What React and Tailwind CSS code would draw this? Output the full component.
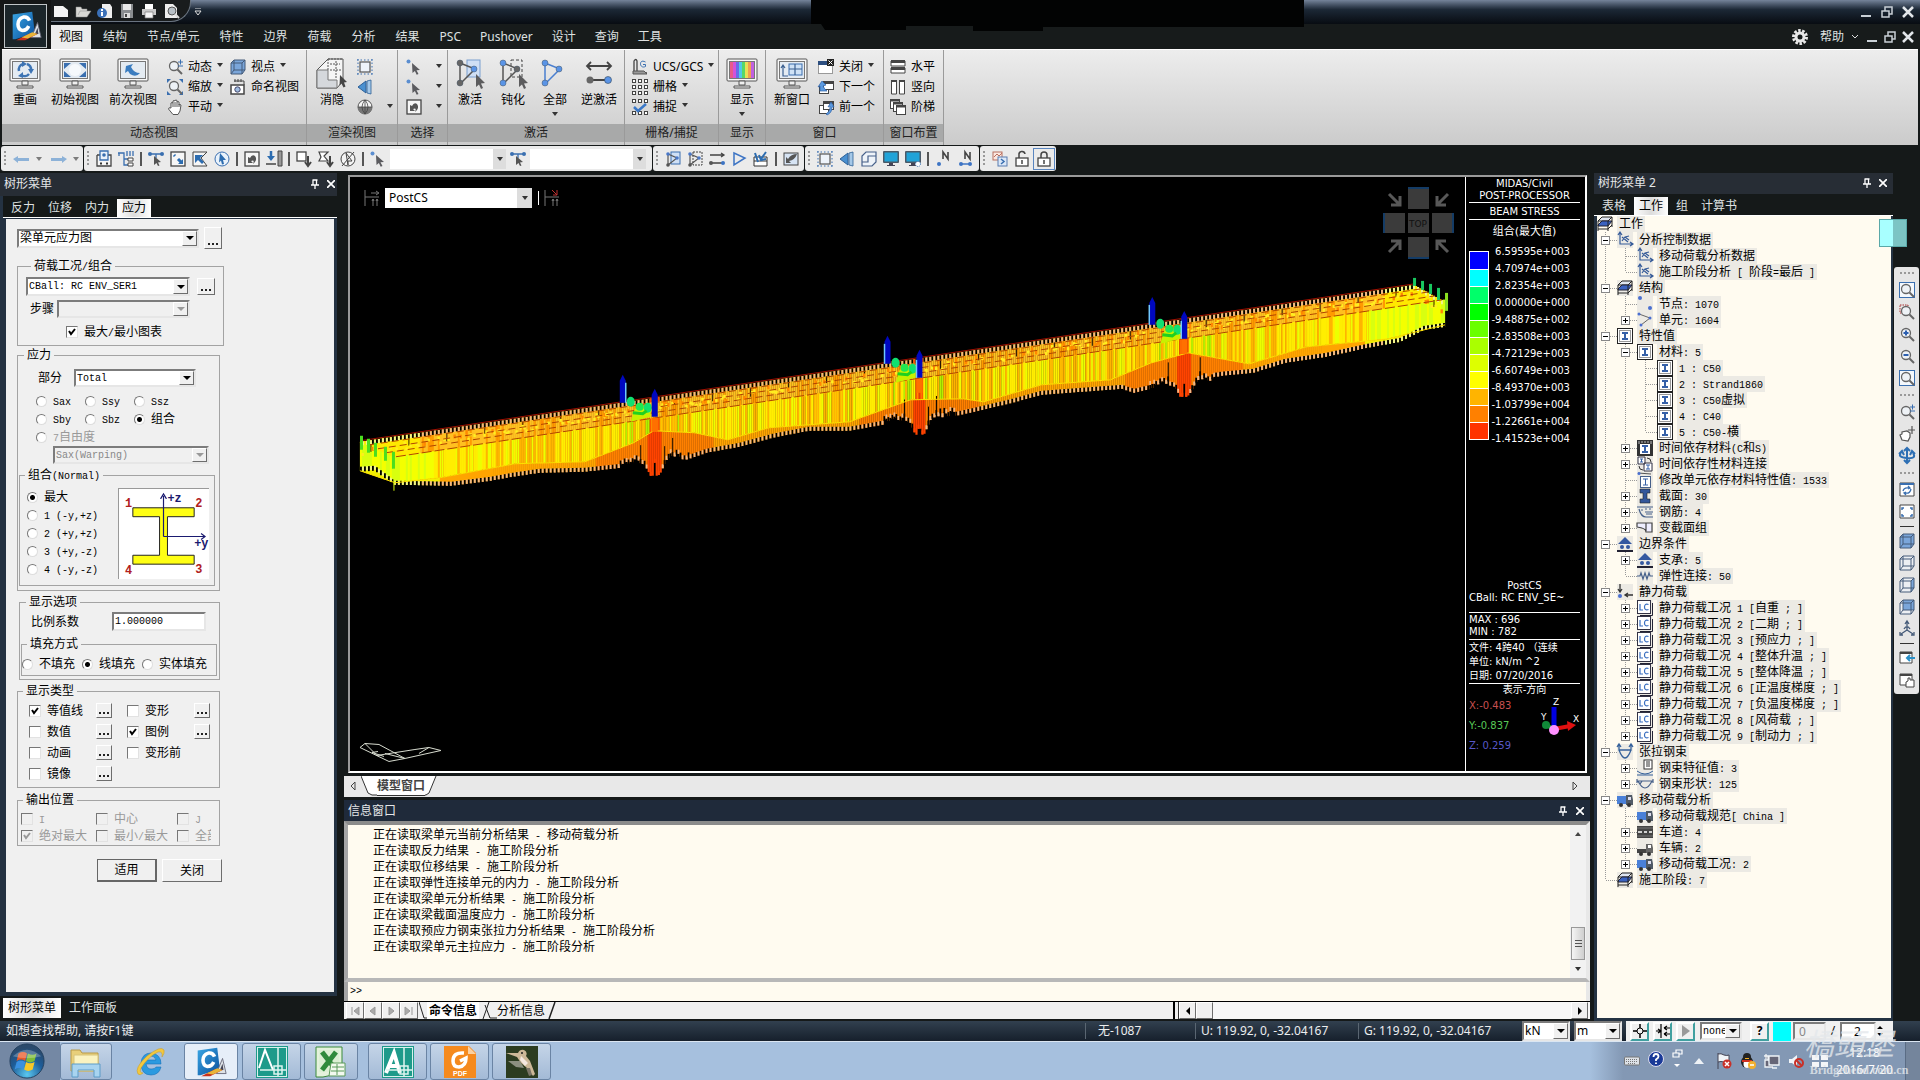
import { useState } from 'react';
import { clsx } from 'clsx';

// --- SMALL HELPERS ---
const MONO = "font-[family-name:'Liberation_Mono',monospace] text-[10px]";

// Latin runs are set in the half-width face, Chinese stays in the full-width one
const Txt = ({ children }) =>
  String(children).split(/([\x20-\x7e]+)/).filter(Boolean).map((part, i) =>
    /^[\x20-\x7e]/.test(part)
      ? <span key={i} className="whitespace-pre leading-none font-[family-name:'Liberation_Mono',monospace] text-[10px]">{part}</span>
      : part
  );

const Caret = ({ className = '' }) => (
  <svg viewBox="0 0 6 4" className={clsx('w-[6px] h-[4px] shrink-0', className)}><path d="M0 0h6L3 4z" fill="#333" /></svg>
);

// --- ICON DRAWINGS (16x16) ---
const cursor = <path d="M6 4l8 7-3.500.3 2 3.700-1.800.8-1.800-3.800L6.500 14z" fill="#5b5b5f" />;
const glass = <><circle cx="7" cy="7" r="4.500" fill="#eef2f6" stroke="#666" strokeWidth="1.300" /><path d="M10.500 10.500l4.500 4.500" stroke="#666" strokeWidth="2" /></>;
const corners = <path d="M0 4V0h4L0 4M12 0h4v4zM0 12v4h4zM16 12v4h-4z" fill="#3a6fb0" />;
const tri = <path d="M3 2l11 5L3 14z" fill="none" stroke="#3d74c4" strokeWidth="1.500" />;
const ibox = <><rect x=".5" y=".5" width="15" height="15" fill="#fff" stroke="#222" /><rect x="2.500" y="2.500" width="11" height="11" fill="none" stroke="#333" strokeDasharray="1 1" /><path d="M5 4h6v2H9v4h2v2H5v-2h2V6H5z" fill="#3560a8" /></>;
const slab = <><path d="M1 5l4-4h10l-4 4z" fill="#dfe5ef" stroke="#222" /><path d="M1 9l4-4h10l-4 5H1z" fill="#3b62c0" stroke="#223" /><path d="M1 5v10M11 5v10M15 1v10M1 13h10l4-4" fill="none" stroke="#222" /></>;
const axes = <path d="M3 1v11h12M1 3l2-3 2 3M13 10l3 2-3 2M5 9l3-4 4 3M8 5l4-1M5 5l6 5" fill="none" stroke="#345a98" strokeWidth="1.200" />;
const truck = (c) => <><rect x="0" y="4" width="9" height="8" fill={c} /><path d="M9 3h6l1 5v5H9z" fill="#505a66" /><rect x="11" y="5" width="3" height="3" fill="#dde" /><circle cx="4" cy="13" r="2" fill="#333" /><circle cx="12" cy="13" r="2" fill="#333" /></>;
const cube = (f) => <><path d="M1 4l3-3h11v10l-3 4H1z" fill={f === 'all' ? '#7ba6da' : '#eceff3'} /><path d="M4 1h11v10H4z" fill={f === 'back' ? '#7ba6da' : 'none'} /><path d="M12 4l3-3v10l-3 4z" fill={f === 'side' ? '#7ba6da' : 'none'} /><path d="M1 4h11v11H1zM1 4l3-3h11l-3 3M15 1v10l-3 4M4 1v10h11M4 11l-3 4" fill="none" stroke="#445a78" /></>;
const nodes = (extra) => <>{extra}<path d="M3 3l9 4-9 7z" fill="none" stroke="#555" strokeWidth="1.200" /><circle cx="3" cy="3" r="1.800" fill="#4a78c8" /><circle cx="12" cy="7" r="1.800" fill="#4a78c8" /><circle cx="3" cy="14" r="1.800" fill="#555" /></>;
const wins = <><rect x="1.500" y="6.500" width="9" height="8" fill="#fff" stroke="#444" /><rect x="5.500" y="2.500" width="10" height="8" fill="#fff" stroke="#444" /><path d="M5 2h11v3H5z" fill="#444" /></>;
const box = <rect x="1" y="1" width="14" height="14" fill="#f6f6f6" stroke="#444" strokeWidth="1.300" />;
const lc = <><path d="M3 15.500h12.500V3" fill="none" stroke="#223" /><rect x=".5" y=".5" width="13" height="13" fill="#fff" stroke="#334" /><path d="M3 4v6h3M11.500 4.500c-3-1-4 .5-4 2.500s1 3.500 4 2.500" fill="none" stroke="#3a6fc0" strokeWidth="1.200" /></>;
const padlock = (open) => <><path d={open ? 'M5 7V4a3 3 0 0 1 6-1' : 'M5 7V4a3 3 0 0 1 6 0v3'} fill="none" stroke="#444" strokeWidth="1.500" /><rect x="2" y="7" width="12" height="8" fill="#fff" stroke="#444" strokeWidth="1.300" /><path d="M8 9v4" stroke="#444" strokeWidth="1.500" /></>;
const nmark = (line) => <><path d="M8 8V1l5 7V1" fill="none" stroke="#444" strokeWidth="1.600" />{line && <path d="M4 13h9" stroke="#3d74c4" strokeWidth="1.500" />}<circle cx="4" cy="13" r="2" fill="#3d74c4" />{line && <circle cx="13" cy="13" r="2" fill="#3d74c4" />}</>;
const screen = <><rect x="0" y="0" width="16" height="12" rx="1" fill="#4a5a68" /><rect x="1.500" y="1.500" width="13" height="9" fill="#21a3d8" /><path d="M6 12h4v2h2v1H4v-1h2z" fill="#445" /></>;

const ICONS = {
  newFile: <path d="M1 3h9l5 4v7H1z" fill="#f4f4f4" />,
  open: <path d="M1 14V4h5l1 2h5v2h4l-4 6zM3 12l2-4h7" fill="#d8d8d4" stroke="#888" strokeWidth=".5" />,
  info: <><path d="M5 1h8l2 3v11H5z" fill="#eee" /><circle cx="5" cy="10" r="5" fill="#3a70b8" /><path d="M5 9v4M5 6v2" stroke="#fff" strokeWidth="2" /></>,
  save: <><path d="M2 1h12v14H2z" fill="#8a8d90" /><path d="M4 1h8v6H4z" fill="#e8e8e8" /><path d="M5 10h6v5H5z" fill="#ddd" /><path d="M6 11h2v3H6z" fill="#444" /></>,
  print: <><path d="M4 1h8v5H4z" fill="#fff" /><path d="M1 6h14v6H1z" fill="#c9c9c9" /><path d="M4 9h8v6H4z" fill="#f4f4f4" stroke="#777" strokeWidth=".7" /></>,
  preview: <><path d="M2 1h8l4 4v10H2z" fill="#eee" /><circle cx="9" cy="8" r="4" fill="#b8c0c6" stroke="#555" /><path d="M12 11l4 4" stroke="#ddd" strokeWidth="2" /></>,
  dynamic: <>{glass}<path d="M11 3h5M13.500 .5v5M11 7h5" stroke="#3a6fb0" /></>,
  zoomFit: <>{corners}{glass}</>,
  hand: <path d="M4 9V4q1-1 2 0V2q1-1 2 0V1.500q1-1 2 0V3q1-1 2 0v3q1-1 2 0l-1 6-2 3.500H6L1.500 10Q1.500 8 4 9zM6 4v4M8 3v5M10 3v5M12 5v3" fill="#fff" stroke="#555" />,
  viewpoint: cube('all'),
  named: <><rect x="1" y="6" width="13" height="9" fill="#fff" stroke="#444" strokeWidth="1.500" /><path d="M4 2h10v4M5 0v3M8 0v3M11 0v3" fill="none" stroke="#444" /><circle cx="7.500" cy="10.500" r="2.700" fill="#9fbce0" stroke="#446" /></>,
  shrink: <><rect x="3" y="3" width="10" height="10" fill="#eef3fa" stroke="#555" strokeWidth="1.200" /><path d="M1 0v16M15 0v16M0 1h16M0 15h16" stroke="#3a6fb0" strokeDasharray="1.500 2" /></>,
  persp: <><path d="M1 8l8-6v12z" fill="#4a90d0" stroke="#2d5f96" /><path d="M10 2l4-1v14l-4-1z" fill="#a5c8e8" stroke="#2d5f96" strokeWidth=".8" /></>,
  globe: <><circle cx="8" cy="8" r="7" fill="#f4f4f4" stroke="#555" /><path d="M1 8a7 7 0 0 0 14 0z" fill="#777" /><path d="M1 8h14M8 1v14M8 1q-6 7 0 14M8 1q6 7 0 14" fill="none" stroke="#444" strokeWidth=".8" /></>,
  pick: <>{cursor}<circle cx="2.500" cy="2.500" r="2" fill="#5b8ed0" /></>,
  undoBox: <>{box}<path d="M4 6v6h5L7 10q4-2 2 3 5-4 2-8-3-2-5 2z" fill="#555" /></>,
  ucs: <><path d="M2 12V2q2-3 3 0v10M1 14h14" fill="none" stroke="#444" strokeWidth="1.300" /><path d="M13.500 3c-4-2-5 0-5 2s2 4 5 2.500V5.500H11" fill="none" stroke="#3a6fb0" /><path d="M1 12h11l3 3H1z" fill="#999" stroke="#555" /></>,
  grid: [1, 7, 13].map((y) => [0.500, 6.500, 12.500].map((x) => <rect key={`${x}-${y}`} x={x} y={y - 0.500} width="3" height="3" fill="#fff" stroke="#444" />)),
  snap: <>{[0.500, 6.500, 12.500].map((x) => <g key={x}><rect x={x} y=".5" width="3" height="3" fill="#fff" stroke="#444" /><rect x={x} y="12.500" width="3" height="3" fill="#fff" stroke="#444" /></g>)}<path d="M2 8l4 4 8-7" fill="none" stroke="#3a78c8" strokeWidth="2.500" /></>,
  close: <><rect x=".5" y="2.500" width="14" height="12" fill="#fff" stroke="#999" /><path d="M0 2h10v4H0z" fill="#2d4f80" /><path d="M9 0h7v7H9z" fill="#222" /><path d="M10.500 1.500l4 4M14.500 1.500l-4 4" stroke="#fff" /></>,
  next: <>{wins}<path d="M2 12V7l-2 1 4-6 4 4-3 1q2 4 4 5z" fill="#5b9ae0" stroke="#2f62a8" strokeWidth=".7" /></>,
  prev: <>{wins}<path d="M8 15q5-3 4-8l-2 1 3-5 3 5-2 0q0 6-5 8z" fill="#5b9ae0" stroke="#2f62a8" strokeWidth=".7" /></>,
  horiz: <><path d="M1 2h14v5H1zM1 9h14v5H1z" fill="#fff" stroke="#444" /><path d="M1 1h14v3H1zM1 8h14v3H1z" fill="#444" /></>,
  vert: <><path d="M1.500 2h5v13h-5zM9.500 2h5v13h-5z" fill="#fff" stroke="#444" /><path d="M1 1h6v2H1zM9 1h6v2H9z" fill="#444" /></>,
  cascade: <>{[0, 3, 6].map((d) => <g key={d}><rect x={0.500 + d} y={0.500 + d} width="9" height="9" fill="#fff" stroke="#444" /><path d={`M${d} ${d + 1.500}h10`} stroke="#444" strokeWidth="2" /></g>)}</>,
  back: <path d="M0 8l5-3v2h11v3H5v2z" fill="#8db2d8" />,
  fwd: <path d="M16 8l-5-3v2H0v3h11v2z" fill="#8db2d8" />,
  selId: <><path d="M1 4h3M12 4h3v11H1V4" fill="#f6f6f6" stroke="#444" strokeWidth="1.300" /><path d="M4 0h8v9H4z" fill="#eaf1fa" stroke="#3a6fb0" strokeWidth="1.300" /><circle cx="8" cy="4" r="1.800" fill="#3a6fb0" /><path d="M4 12.500h2M10 12.500h2" stroke="#333" strokeWidth="2" /></>,
  selTree: <><path d="M0 2h6v12h6M6 8h5M1 2v3M9 0v5M12 0v5M15 0v5" fill="none" stroke="#3a6fb0" strokeWidth="1.300" /><path d="M10 7h5v3h-5zM10 12h5v3h-5z" fill="#fff" stroke="#444" /></>,
  selSingle: <><path d="M1 3h14M8 3v4" stroke="#3a6fb0" strokeWidth="1.300" /><circle cx="2" cy="3" r="2" fill="#3a6fb0" /><circle cx="14" cy="3" r="2" fill="#3a6fb0" /><path d="M6 5l7 6-3 .5 1.500 3-1.500.5-1.500-3L6 14z" fill="#555" /></>,
  selWin: <>{box}<path d="M4 4l1 1M8 8l3 3" stroke="#2c6cb0" strokeWidth="3" /><path d="M13 8v5H8z" fill="#2c6cb0" /></>,
  selPoly: <><path d="M1 1h14l-6 6 6 8H1z" fill="#f6f6f6" stroke="#444" /><path d="M3 4l8 0-3 3 4 4-2 2-4-4-3 3z" fill="#2c6cb0" /></>,
  selCirc: <><circle cx="8" cy="8" r="7" fill="#e9f2fb" stroke="#3a6fb0" /><path d="M6 2l6 7-3 0 1 4-2 .5-1-4-2 2z" fill="#2c6cb0" /></>,
  selPrev: <>{box}<path d="M4 6v6h5L7 10q4-2 2 3 5-4 2-8-3-2-5 2z" fill="#555" /></>,
  plane: <><path d="M12 0h4v15h-4z" fill="#999" stroke="#444" /><path d="M5 0v6" fill="none" stroke="#2c6cb0" strokeWidth="2.500" /><path d="M1 5h8l-4 5z" fill="#2c6cb0" /><path d="M0 13h10" stroke="#444" strokeWidth="1.500" /></>,
  unWin: <><rect x="1" y="1" width="9" height="9" fill="#fff" stroke="#444" strokeWidth="1.300" /><path d="M12 5v9M9 11l3 4 3-4" fill="none" stroke="#444" strokeWidth="2" /></>,
  unPoly: <><path d="M1 1h9L6 5l4 5H1l2-4z" fill="#fff" stroke="#444" strokeWidth="1.200" /><path d="M12 5v9M9 11l3 4 3-4" fill="none" stroke="#444" strokeWidth="2" /></>,
  unCirc: <><circle cx="8" cy="8" r="7" fill="#f4f4f4" stroke="#444" /><path d="M2 15L14 1M6 2l6 8-4 0 0 4z" fill="none" stroke="#444" /></>,
  act: nodes(<rect x="6" y="1" width="9" height="12" fill="#cfe0f6" stroke="#3a6fb0" />),
  deact: nodes(<rect x="6" y="1" width="9" height="13" fill="none" stroke="#444" strokeDasharray="2 1" />),
  inv: <><path d="M1 4h13M12 2l3 2-3 2M2 12h12" fill="none" stroke="#444" strokeWidth="1.300" /><circle cx="2" cy="12" r="2" fill="#555" /><circle cx="14" cy="12" r="2" fill="#3d74c4" /></>,
  all: tri,
  actId: <><path d="M1 6h13v9H1zM1 10h13" fill="#fff" stroke="#333" /><path d="M2 2l3 9M13 1L8 8M6 4l2 5 5-1" fill="none" stroke="#2c6cb0" strokeWidth="2" /></>,
  actPrev: <><rect x="1" y="2" width="14" height="12" fill="#d7e4f4" stroke="#444" /><path d="M3 6v6h5l-2-2q6-1 8-7-6 0-9 5z" fill="#555" /></>,
  hidden: <path d="M5 1h10v10l-4 4H1V5zM1 11h6V5h8" fill="#eef3f9" stroke="#46608a" strokeWidth="1.200" />,
  screen,
  screen2: <>{screen}<circle cx="13" cy="13" r="2.500" fill="#fff" stroke="#3a6fb0" strokeDasharray="1 1" /></>,
  nodeNo: nmark(false),
  elemNo: nmark(true),
  pages: <><rect x="1" y="1" width="9" height="8" fill="#fbe7e0" stroke="#b87060" /><path d="M2 6l3-3 2 2 3-3" fill="none" stroke="#b87060" /><rect x="6" y="6" width="9" height="9" fill="#dbe8f8" stroke="#5a7db0" /><path d="M9 8l3 2.500L9 13" fill="none" stroke="#3a6fb0" strokeWidth="1.500" /></>,
  unlock: padlock(true),
  lock: padlock(false),
  // tree
  slab, axes, ibox,
  nodePts: <><circle cx="3" cy="2" r="2" fill="#4a6fd0" /><circle cx="13" cy="12" r="2" fill="#4a6fd0" /></>,
  elems: <><path d="M2 2l11 4-9 7" fill="none" stroke="#666" /><circle cx="2" cy="2" r="1.500" fill="#4a6fd0" /><circle cx="13" cy="6" r="1.500" fill="#4a6fd0" /><circle cx="4" cy="13" r="1.500" fill="#4a6fd0" /></>,
  timeMat: <><path d="M0 0h16v16H0z" fill="#333" /><path d="M3 4h10v10H3z" fill="#fff" /><path d="M5 5h6v2H9v4h2v2H5v-2h2V7H5z" fill="#3560a8" /><path d="M2 1v3M5 1v2M8 1v2M11 1v2M14 1v3" stroke="#bbb" /></>,
  timeLink: <><path d="M1 1h7v7H1zM7 7h8v8H7z" fill="#fff" stroke="#334" /><path d="M3 3h3M4.500 3v3M3 6h3M9 9h4M11 9v4M9 13h4" stroke="#3560a8" /><path d="M10 2q4 0 4 4M2 10q0 4 4 4" fill="none" stroke="#333" /></>,
  modElem: <><path d="M1 1l13 1" stroke="#555" /><circle cx="2" cy="1.500" r="1.500" fill="#4a6fd0" /><rect x="3.500" y="4.500" width="10" height="11" fill="#fff" stroke="#46608a" /><path d="M6 7h5M8.500 7v6M6 13h5" stroke="#3560a8" /></>,
  section: <path d="M3 1h10v4h-3v6h3v4H3v-4h3V5H3z" fill="#33569a" stroke="#222" strokeWidth=".6" />,
  rebar: <path d="M0 3h16M2 5q2 8 7 8h7M8 8h8M4 6h2M8 5h2M12 5h2M9 10h6" fill="none" stroke="#46608a" strokeWidth="1.200" />,
  taper: <path d="M0 3h15v9H9q0-4-9-5zM9 3v8" fill="#eef" stroke="#444" strokeWidth="1.200" />,
  bound: <><path d="M8 1l7 7H1z" fill="#3458a0" /><circle cx="5" cy="11" r="2" fill="#3458a0" /><circle cx="11" cy="11" r="2" fill="#3458a0" /><path d="M0 15h16" stroke="#223" strokeWidth="2" /></>,
  spring: <path d="M0 8h3l1-3 2 6 2-6 2 6 2-6 1 3h3" fill="none" stroke="#46608a" strokeWidth="1.200" />,
  load: <><path d="M3 0v7M1 5l2 3 2-3M16 11H9M11 9l-3 2 3 2" fill="none" stroke="#333" strokeWidth="1.300" /><circle cx="3" cy="12" r="2" fill="#4a6fd0" /></>,
  lc,
  tendon: <path d="M2 1v5h12V1M0 3l2-3 2 3M12 3l2-3 2 3M2 6q6 16 12 0" fill="none" stroke="#34609a" strokeWidth="1.300" />,
  tendonProp: <><rect x="7" y="0" width="8" height="9" fill="#fff" stroke="#333" /><path d="M9 2h4M9 4h4M9 6h4" stroke="#333" /><path d="M0 11q8 6 16 0M0 15h16" fill="none" stroke="#34609a" /></>,
  tendonShape: <path d="M0 5h16M0 3v4M16 3v4M1 5q7 14 14 0M3 8l-2-3h4z" fill="none" stroke="#46608a" strokeWidth="1.200" />,
  truckBlue: truck('#4a80d8'),
  truckGray: <><path d="M0 9h9v4H0z" fill="#444" /><path d="M9 4h6l1 4v5H9z" fill="#666" /><rect x="11" y="5" width="3" height="3" fill="#fff" /><circle cx="4" cy="14" r="2" fill="#333" /><circle cx="12" cy="14" r="2" fill="#333" /></>,
  lane: <><path d="M0 2h16v12H0z" fill="#444" /><path d="M1 8h4M7 8h3M12 8h3" stroke="#fff" strokeWidth="1.500" /><path d="M0 4h16M0 12h16" stroke="#999" strokeWidth=".6" /></>,
  // side bar
  sFit: <><rect x=".5" y=".5" width="15" height="15" fill="#f4f8fc" stroke="#3a6fb0" />{glass}</>,
  sWin: <><rect x="1" y="1" width="8" height="8" fill="none" stroke="#a33" strokeDasharray="1.500 1" />{glass}</>,
  sIn: <>{glass}<path d="M4.500 7h5M7 4.500v5" stroke="#2c5fb0" strokeWidth="2" /></>,
  sOut: <>{glass}<path d="M4.500 7h5" stroke="#2c5fb0" strokeWidth="2" /></>,
  sPan: <path d="M3 14L1 9l2-1V6l5-1 3 2v4l-2 4zM13 0v8M9 4h7" fill="#fff" stroke="#555" strokeWidth="1.200" />,
  sRot: <path d="M8 0v14M5 3l3-3 3 3M5 12l3 3 3-3M2 5q-4 4 6 5t6-5M0 6l3-3 2 4M16 6l-3-3-2 4" fill="none" stroke="#2d6fb4" strokeWidth="2" />,
  sRedraw: <><path d="M1 1h14v13H1z" fill="#fff" stroke="#444" /><path d="M1 2h14" stroke="#3a6fb0" strokeWidth="2" /><path d="M4 9q1-4 6-3M12 7q-1 5-6 4M9 4l2 2-2 1M7 13l-2-2 2-1" fill="none" stroke="#3a6fb0" strokeWidth="1.300" /></>,
  sInit: <><path d="M1 1h14v13H1z" fill="#fff" stroke="#444" /><path d="M3 6V4h2M11 4h2v2M3 10v2h2M11 12h2v-2" fill="none" stroke="#3a6fb0" strokeWidth="1.500" /></>,
  cubeA: cube('all'), cubeB: cube('none'), cubeC: cube('side'), cubeD: cube('back'),
  sIso: <path d="M8 1v8M8 9l-6 4M8 9l6 4M6 3l2-3 2 3M1 11l0 3h3M15 11v3h-3M5 8q3-5 6 0" fill="none" stroke="#445a78" strokeWidth="1.300" />,
  sDock: <><path d="M1 2h12v11H1z" fill="#fff" stroke="#444" /><path d="M1 3h12" stroke="#444" strokeWidth="2" /><path d="M16 8h-7M11 5L8 8l3 3" fill="none" stroke="#2a90c8" strokeWidth="2" /></>,
  sHand: <><path d="M1 2h12v11H1z" fill="#fff" stroke="#444" /><path d="M1 3h12" stroke="#444" strokeWidth="2" /><path d="M7 15v-5l2-1V6h2v2h4v7z" fill="#fff" stroke="#444" /></>,
};

const Icon = ({ name, size = 'w-4 h-4' }) => (
  <svg viewBox="0 0 16 16" className={clsx(size, 'shrink-0 overflow-visible')} aria-hidden="true">{ICONS[name]}</svg>
);

// --- RIBBON BIG ICONS (32x32) ---
const monitor = (inner) => (
  <>
    <rect x="1" y="1" width="30" height="22" rx="1" fill="#f8f8f8" stroke="#555" />
    <rect x="3.500" y="3.500" width="25" height="17" fill="#e4ebf2" stroke="#777" />
    {inner}
    <path d="M13 23h6v4h-6zM8 28h16v2H8z" fill="#f0f0f0" stroke="#555" />
  </>
);
const triNodes = (extra, c1, c2, c3) => (
  <>
    {extra}
    <path d="M6 5l15 6L6 26z" fill="none" stroke={c3 === '#5a94e6' ? '#4a7fd0' : '#555'} strokeWidth="1.500" />
    <circle cx="6" cy="5" r="3" fill={c1} stroke="#456" strokeWidth=".5" />
    <circle cx="20" cy="11" r="3" fill={c2} stroke="#456" strokeWidth=".5" />
    <circle cx="6" cy="25" r="3" fill={c3} stroke="#456" strokeWidth=".5" />
  </>
);
const bigCursor = <path d="M22 16l9 9-4 .5 2 4.500-2 1-2-4.500-3 2.500z" fill="#5c5c5e" />;
const BIG = {
  redraw: monitor(<><path d="M10 13a6 6 0 0 1 4-7M18 6a6 6 0 0 1 4 6M20 16a6 6 0 0 1-8 1" fill="none" stroke="#3d74b4" strokeWidth="2.500" /><path d="M13 3l5 3-5 3zM19 11h6l-3 5zM14 14v6l-5-2z" fill="#3d74b4" /></>),
  initial: monitor(<><path d="M5 5h7l-7 6zM20 5h7v6zM5 13v6h7zM27 13v6h-7z" fill="#3a6fb0" /><circle cx="16" cy="12" r="6" fill="#f6f9fc" /></>),
  previous: monitor(<path d="M9 8l7-2-2 3q3 6 9 6-4 5-10 1l-2-3-3 2z" fill="#3a7cc0" />),
  hide: <><path d="M1 12L12 1h15v22l-6 7H1z" fill="#f5f5f5" stroke="#555" /><path d="M1 12h11v10h9v8H1z" fill="#d5d8dc" stroke="#777" /><path d="M12 1v11M12 1h14M20 3v18M14 6h10M14 12h12" stroke="#555" strokeDasharray="2 1" /><path d="M24 17l7 7-3 .5 1.500 4-2 1-2-4-2 2z" fill="#444" /></>,
  activate: <>{triNodes(<rect x="13" y="2" width="13" height="17" fill="#cfdff5" stroke="#7b9fd0" />, '#666', '#5a94e6', '#666')}{bigCursor}</>,
  deactivate: <>{triNodes(<rect x="14" y="2" width="11" height="17" fill="none" stroke="#444" strokeDasharray="3 2" />, '#5a94e6', '#666', '#5a94e5')}{bigCursor}</>,
  all: triNodes(null, '#5a94e6', '#5a94e6', '#5a94e6'),
  inverse: <><path d="M5 8h22M8 4L4 8l4 4M24 4l4 4-4 4M6 22h18" fill="none" stroke="#444" strokeWidth="1.800" /><circle cx="7" cy="22" r="3.500" fill="#666" /><circle cx="25" cy="22" r="3.500" fill="#5a94e6" stroke="#345" strokeWidth=".6" /></>,
  display: monitor(<>{['#e85a8a', '#d452d8', '#6a6ae8', '#50c8e8', '#58d868', '#e8e058', '#f0a050', '#c060e0'].map((c, i) => <rect key={c} x={4 + i * 3} y="4" width="3" height="16" fill={c} />)}</>),
  newwin: monitor(<><rect x="13" y="6" width="13" height="11" fill="#cfe2f6" stroke="#3a6fb0" /><path d="M13 11h13M19 6v11M7 8v10h5M5 10l2-3 2 3" fill="none" stroke="#3a5f90" strokeWidth="1.200" /></>),
};

const BigButton = ({ icon, label, drop, width }) => (
  <button className={clsx('flex flex-col items-center pt-2', width)}>
    <svg viewBox="0 0 32 32" className="w-8 h-8" aria-hidden="true">{BIG[icon]}</svg>
    <span className="mt-[2px] leading-4">{label}</span>
    {drop && <Caret className="mt-[4px]" />}
  </button>
);

const SmallButton = ({ icon, label, drop }) => (
  <button className="flex items-center h-5 gap-[5px] text-left whitespace-nowrap" aria-label={label || icon}>
    <Icon name={icon} />
    {label && <span>{label}</span>}
    {drop && <Caret className="-mt-1" />}
  </button>
);

const Group = ({ title, width, children }) => (
  <section className={clsx('flex flex-col border-r border-[#9a9a9a] pb-[3px]', width)}>
    <div className="flex flex-1">{children}</div>
    <h2 className="h-[18px] bg-[#a8a9a9] text-center leading-[18px] text-[#222] whitespace-nowrap overflow-hidden">{title}</h2>
  </section>
);

const Ribbon = () => (
  <div className="flex h-24 ml-[2px] mr-[2px] bg-linear-to-b from-[#ededed] to-[#cbcbcb] border-t border-white text-black">
    <Group title="动态视图" width="w-[305px]">
      <BigButton icon="redraw" label="重画" width="w-[46px]" />
      <BigButton icon="initial" label="初始视图" width="w-[54px]" />
      <BigButton icon="previous" label="前次视图" width="w-[62px]" />
      <div className="flex flex-col pt-[7px] pl-[3px] w-[64px]">
        <SmallButton icon="dynamic" label="动态" drop />
        <SmallButton icon="zoomFit" label="缩放" drop />
        <SmallButton icon="hand" label="平动" drop />
      </div>
      <div className="flex flex-col pt-[7px] pl-[2px]">
        <SmallButton icon="viewpoint" label="视点" drop />
        <SmallButton icon="named" label="命名视图" />
      </div>
    </Group>
    <Group title="渲染视图" width="w-[91px]">
      <BigButton icon="hide" label="消隐" width="w-[50px]" />
      <div className="flex flex-col pt-[7px]">
        <SmallButton icon="shrink" />
        <SmallButton icon="persp" />
        <SmallButton icon="globe" />
      </div>
      <Caret className="mt-[54px] ml-[14px]" />
    </Group>
    <Group title="选择" width="w-[50px]">
      <div className="flex flex-col pt-[7px] pl-2">
        <SmallButton icon="pick" />
        <SmallButton icon="pick" />
        <SmallButton icon="undoBox" />
      </div>
      <div className="flex flex-col pl-[14px] pt-[14px] gap-4"><Caret /><Caret /><Caret /></div>
    </Group>
    <Group title="激活" width="w-[177px]">
      <BigButton icon="activate" label="激活" width="w-[44px]" />
      <BigButton icon="deactivate" label="钝化" width="w-[42px]" />
      <BigButton icon="all" label="全部" drop width="w-[42px]" />
      <BigButton icon="inverse" label="逆激活" width="w-[46px]" />
    </Group>
    <Group title="栅格/捕捉" width="w-[94px]">
      <div className="flex flex-col pt-[7px] pl-[7px]">
        <SmallButton icon="ucs" label="UCS/GCS" drop />
        <SmallButton icon="grid" label="栅格" drop />
        <SmallButton icon="snap" label="捕捉" drop />
      </div>
    </Group>
    <Group title="显示" width="w-[47px]">
      <BigButton icon="display" label="显示" drop width="w-[46px]" />
    </Group>
    <Group title="窗口" width="w-[118px]">
      <BigButton icon="newwin" label="新窗口" width="w-[52px]" />
      <div className="flex flex-col pt-[7px]">
        <SmallButton icon="close" label="关闭" drop />
        <SmallButton icon="next" label="下一个" />
        <SmallButton icon="prev" label="前一个" />
      </div>
    </Group>
    <Group title="窗口布置" width="w-[60px]">
      <div className="flex flex-col pt-[7px] pl-[6px]">
        <SmallButton icon="horiz" label="水平" />
        <SmallButton icon="vert" label="竖向" />
        <SmallButton icon="cascade" label="阶梯" />
      </div>
    </Group>
  </div>
);

// --- TITLE + MENU ---
const MENUS = ['视图', '结构', '节点/单元', '特性', '边界', '荷载', '分析', '结果', 'PSC', 'Pushover', '设计', '查询', '工具'];

const WinButtons = ({ gap = 'gap-[9px]' }) => (
  <div className={clsx('flex items-center pr-[6px]', gap)}>
    <button aria-label="minimize"><svg viewBox="0 0 12 12" className="w-3 h-3"><path d="M1 10h10" stroke="#c9d0d6" strokeWidth="2" /></svg></button>
    <button aria-label="restore"><svg viewBox="0 0 12 12" className="w-3 h-3"><path d="M1 5h7v6H1zM4 5V1h7v7H8" fill="none" stroke="#c9d0d6" strokeWidth="1.500" /></svg></button>
    <button aria-label="close"><svg viewBox="0 0 12 12" className="w-3 h-3"><path d="M1 1l10 10M11 1L1 11" stroke="#e2e6ea" strokeWidth="2.500" /></svg></button>
  </div>
);

const CLogo = ({ className }) => (
  <svg viewBox="0 0 36 36" className={className} aria-hidden="true">
    <defs><linearGradient id="cblue" x1="0" y1="0" x2="1" y2="1"><stop offset="0" stopColor="#3aa6e4" /><stop offset="1" stopColor="#0a4f9c" /></linearGradient></defs>
    <path d="M3 5l22-3 3 24-22 7H3z" fill="url(#cblue)" />
    <path d="M22 12q-2-5-7-4-6 2-6 8t5 7q5 0 7-5" fill="none" stroke="#fff" strokeWidth="4" />
    <path d="M24 31l7-17 4 17z" fill="#dde2e6" stroke="#667" /><path d="M28 27l3-7 1 7z" fill="#445" />
    <path d="M7 34l16-8 8 1-14 7z" fill="#c8301c" /><path d="M13 31l12-6 6 2-11 5z" fill="#e8b53a" />
  </svg>
);

const Header = () => (
  <header className="relative flex h-[49px] bg-[#171b1b]">
    <div className="w-[51px] shrink-0 pt-1 pl-1 bg-[#141616]">
      <button aria-label="midas Civil" className="w-[43px] h-[44px] border border-[#bfc4c6] bg-[#1b2529] flex items-center justify-center">
        <CLogo className="w-8 h-9" />
      </button>
    </div>
    <div className="flex-1 flex flex-col">
      <div className="h-6 flex items-center bg-linear-to-b from-[#75849a] via-[#1c2836] via-40% to-[#080c12]">
        <div className="h-[22px] w-[140px] mb-[2px] flex items-center gap-[6px] pl-[2px] bg-[#191c1d] rounded-br-[20px] border-b border-r border-[#6a7480]">
          {['newFile', 'open', 'info', 'save', 'print', 'preview'].map((n) => (
            <button key={n} aria-label={n}><Icon name={n} /></button>
          ))}
        </div>
        <svg viewBox="0 0 8 8" className="w-2 h-2 ml-[3px]"><path d="M1 0h6M1 3h6L4 7z" stroke="#ddd" fill="none" /></svg>
        <div className="flex-1" />
        <WinButtons />
      </div>
      <nav className="h-[25px] flex items-end">
        {MENUS.map((m, i) => (
          <a key={m} href="#" className={clsx('px-[8px] h-[24px] leading-6 whitespace-nowrap', i < 8 ? 'mr-[4px]' : 'mr-[3px]', i === 0 ? 'bg-[#ededed] text-black' : 'text-[#dfe1e1]')}>{m}</a>
        ))}
        <div className="flex-1" />
        <div className="flex items-center h-full gap-[8px]">
          <svg viewBox="0 0 16 16" className="w-4 h-4"><circle cx="8" cy="8" r="6.500" fill="none" stroke="#e8e8e8" strokeWidth="3" strokeDasharray="2.500 1.500" /><circle cx="8" cy="8" r="4" fill="none" stroke="#e8e8e8" strokeWidth="3" /></svg>
          <button className="text-[#dfe1e1] flex items-center gap-[8px] ml-[4px]">帮助
            <svg viewBox="0 0 6 4" className="w-[6px] h-1"><path d="M0 0l3 3 3-3" stroke="#ddd" fill="none" /></svg>
          </button>
          <WinButtons gap="gap-[6px]" />
        </div>
      </nav>
    </div>
    <svg viewBox="0 0 493 34" className="absolute left-[811px] top-0 w-[493px] h-[34px]" aria-hidden="true">
      <path d="M0 0h493v27H232v4h-70v-5H95v4H14l-4-6H0z" fill="#020303" />
    </svg>
  </header>
);

// --- ICON TOOLBAR ---
const Seg = ({ children, width }) => (
  <div className={clsx('flex items-center h-[25px] bg-[#ebebeb] rounded-[3px] mr-px pl-[3px]', width)}>
    <svg viewBox="0 0 2 16" className="w-[2px] h-4 mr-[7px] shrink-0"><path d="M1 0v16" stroke="#999" strokeWidth="2" strokeDasharray="2 2" /></svg>
    {children}
  </div>
);
const Tools = ({ names }) => (
  <div className="flex items-center gap-[6px]">
    {names.map((n, i) => n === '|'
      ? <span key={i} className="w-[2px] h-[14px] bg-[#555]" />
      : <button key={i} aria-label={n} className={clsx(n === 'lock' && 'outline outline-[#5a86c0] outline-offset-2')}><Icon name={n} /></button>)}
  </div>
);
const ToolCombo = ({ label }) => (
  <div className="flex items-center h-5 mx-[4px] bg-white">
    <input aria-label={label} className="w-[103px] h-5 bg-white px-1 outline-none" />
    <button aria-label={`${label} list`} className="w-[13px] h-5 bg-[#ddd] flex items-center justify-center"><Caret /></button>
  </div>
);

const Toolbar = () => (
  <div className="flex items-center h-[27px] bg-[#151919] pl-px">
    <Seg width="w-[82px]">
      <button aria-label="undo"><Icon name="back" /></button><Caret className="ml-[7px] mr-[9px] opacity-60" />
      <button aria-label="redo"><Icon name="fwd" /></button><Caret className="ml-[6px] opacity-60" />
    </Seg>
    <Seg width="w-[568px]">
      <Tools names={['selId', 'selTree', '|', 'selSingle', 'selWin', 'selPoly', 'selCirc', '|', 'selPrev', 'plane', '|', 'unWin', 'unPoly', 'unCirc', '|', 'pick']} />
      <ToolCombo label="nodes" />
      <Icon name="selSingle" />
      <ToolCombo label="elements" />
    </Seg>
    <Seg width="w-[151px]"><Tools names={['act', 'deact', 'inv', 'all', 'actId', '|', 'actPrev']} /></Seg>
    <Seg width="w-[174px]"><Tools names={['shrink', 'persp', 'hidden', 'screen', 'screen2', '|', 'nodeNo', 'elemNo']} /></Seg>
    <Seg width="w-[76px]"><Tools names={['pages', 'unlock', 'lock']} /></Seg>
  </div>
);

// --- PANEL CHROME ---
const PanelHead = ({ title, tall }) => (
  <div className={clsx('flex items-center pl-[4px] pb-[2px] bg-[#272d35] text-[#e4e6e8]', tall ? 'h-[23px] pr-[2px]' : 'h-[21px] pr-[6px]')}>
    <h2 className="flex-1">{title}</h2>
    <button aria-label={`pin ${title}`} className="mr-[8px]"><svg viewBox="0 0 8 10" className="w-2 h-[10px]"><path d="M2 1v5M5.500 1v5M1.500 1h5M0 6h8M4 6v4" fill="none" stroke="#fff" strokeWidth="1.300" /></svg></button>
    <button aria-label={`close ${title}`}><svg viewBox="0 0 8 8" className="w-2 h-2"><path d="M0 0l8 8M8 0L0 8" stroke="#fff" strokeWidth="1.700" /></svg></button>
  </div>
);

const Tabs = ({ items, initial }) => {
  const [active, setActive] = useState(initial);
  return (
    <div className="flex items-end h-[22px] pl-[3px] gap-[3px] bg-[#151919] border-b border-white">
      {items.map((t) => (
        <button key={t} onClick={() => setActive(t)} className={clsx('h-[18px] leading-[18px] px-[5px]', t === active ? 'bg-linear-to-r from-white via-[#dcdcdc] to-white text-black' : 'text-[#dfe1e1]')}>{t}</button>
      ))}
    </div>
  );
};

// --- FORM CONTROLS ---
const SUNK = 'border-2 border-t-[#7c7c7c] border-l-[#7c7c7c] border-b-[#e6e6e6] border-r-[#e6e6e6]';
const RAISED = 'border border-t-white border-l-white border-b-[#6d6d6d] border-r-[#6d6d6d] bg-[#f0f0f0]';

const Combo = ({ label, value, width = 'flex-1', height = 'h-[18px]', disabled, cjk, sans }) => (
  <span className={clsx('relative block', width, height)}>
    <select aria-label={label} disabled={disabled} defaultValue={value}
      className={clsx('appearance-none w-full h-full pl-[1px] outline-none', SUNK,
        disabled ? 'bg-[#f0f0f0] text-[#888]' : 'bg-white text-black',
        !cjk && !sans && MONO, cjk && 'text-[12px] leading-[14px]')}>
      <option>{value}</option>
    </select>
    <span className={clsx('absolute right-[2px] top-[2px] bottom-[2px] w-[15px] flex items-center justify-center pointer-events-none', RAISED)}>
      <svg viewBox="0 0 8 4" className="w-2 h-1"><path d="M0 0h8L4 4z" fill={disabled ? '#999' : '#000'} /></svg>
    </span>
  </span>
);

const Dots = ({ size = 'w-4 h-[15px]', label }) => (
  <button type="button" aria-label={label} className={clsx('flex items-end justify-center pb-[3px] shrink-0', RAISED, size)}>
    <svg viewBox="0 0 10 2" className="w-[10px] h-[2px]"><path d="M0 0h2v2H0zM4 0h2v2H4zM8 0h2v2H8z" fill="#222" /></svg>
  </button>
);

const Radio = ({ name, label, checked, disabled, width }) => (
  <label className={clsx('flex items-center gap-[6px] whitespace-nowrap', width, disabled && 'text-[#999]')}>
    <input type="radio" name={name} defaultChecked={checked} disabled={disabled}
      className="appearance-none w-[11px] h-[11px] shrink-0 rounded-full border border-t-[#777] border-l-[#777] border-b-[#ddd] border-r-[#ddd] bg-white checked:bg-[radial-gradient(circle,#000_2px,#fff_3px)]" />
    <span><Txt>{label}</Txt></span>
  </label>
);

const Check = ({ label, checked, disabled, width }) => (
  <label className={clsx('flex items-center gap-[6px] whitespace-nowrap overflow-hidden', width, disabled && 'text-[#999]')}>
    <span className="grid shrink-0">
      <input type="checkbox" defaultChecked={checked} disabled={disabled}
        className={clsx('peer appearance-none col-start-1 row-start-1 w-3 h-3 border border-t-[#777] border-l-[#777] border-b-[#e2e2e2] border-r-[#e2e2e2]', disabled ? 'bg-[#f0f0f0]' : 'bg-white')} />
      <svg viewBox="0 0 12 12" className="col-start-1 row-start-1 w-3 h-3 invisible peer-checked:visible pointer-events-none"><path d="M3 5l2 3 4-5" fill="none" stroke={disabled ? '#999' : '#000'} strokeWidth="2" /></svg>
    </span>
    <span><Txt>{label}</Txt></span>
  </label>
);

const Box = ({ title, className, children }) => (
  <fieldset className={clsx('border border-[#a3a3a3]', className)}>
    <legend className="ml-[5px] px-[3px] h-4 leading-4"><Txt>{title}</Txt></legend>
    {children}
  </fieldset>
);

const SectionSketch = () => (
  <svg viewBox="0 0 91 91" className="w-[91px] h-[91px] bg-white border-t border-l border-[#999]" role="img" aria-label="section">
    <path d="M14 19h62v9H49v39h27v9H14v-9h27V28H14z" fill="#ffff14" stroke="#222" />
    <path d="M45 48V7M42 10l3-5 3 5M45 48h41M83 45l4 3-4 3" fill="none" stroke="#1a1a70" strokeWidth="1.200" />
    <g fontFamily="Liberation Mono, monospace" fontWeight="bold" fontSize="12">
      <text x="6" y="18" fill="#b02020">1</text><text x="77" y="18" fill="#b02020">2</text>
      <text x="6" y="86" fill="#b02020">4</text><text x="77" y="85" fill="#b02020">3</text>
      <text x="49" y="13" fill="#1a1a70">+z</text><text x="76" y="59" fill="#1a1a70">+y</text>
    </g>
  </svg>
);

const LeftPanel = () => (
  <aside className="flex flex-col w-[340px] shrink-0 bg-[#151919]">
    <div className="flex-1 flex flex-col mr-[3px] bg-[#243242]">
      <PanelHead title="树形菜单" tall />
      <div className="ml-[3px]"><Tabs items={['反力', '位移', '内力', '应力']} initial="应力" /></div>
      <form className="flex-1 ml-[6px] mr-[3px] mt-px mb-1 bg-[#f0f0f0] pl-[11px] pt-2 text-black">
        <div className="w-[205px]">
          <div className="flex items-center gap-[5px] h-[22px]">
            <Combo label="结果类型" value="梁单元应力图" width="w-[182px]" height="h-[19px]" cjk />
            <Dots label="结果类型设置" size="w-[18px] h-[22px]" />
          </div>

          <Box title="荷载工况/组合" className="mt-[9px] mr-[2px] px-[8px] pb-[5px]">
            <div className="flex items-center gap-[7px] h-[19px] mt-[3px]">
              <Combo label="荷载工况" value="CBall: RC ENV_SER1" width="w-[164px]" height="h-[19px]" />
              <Dots label="荷载工况设置" size="w-[18px] h-[17px]" />
            </div>
            <div className="flex items-center gap-[3px] mt-1 pl-1">
              <span>步骤</span><Combo label="步骤" value="" width="w-[133px]" disabled />
            </div>
            <div className="flex items-center h-4 mt-[6px] pl-[40px]"><Check label="最大/最小图表" checked /></div>
          </Box>

          <Box title="应力" className="mt-px mr-[2px] pb-1 px-px">
            <div className="flex items-center gap-3 mt-[6px] pl-[19px]">
              <span>部分</span><Combo label="部分" value="Total" width="w-[122px]" />
            </div>
            <div className="grid grid-cols-[49px_49px_60px] auto-rows-[18px] mt-[5px] pl-[17px]">
              <Radio name="comp" label="Sax" /><Radio name="comp" label="Ssy" /><Radio name="comp" label="Ssz" />
              <Radio name="comp" label="Sby" /><Radio name="comp" label="Sbz" /><Radio name="comp" label="组合" checked />
              <Radio name="comp" label="7自由度" disabled />
            </div>
            <div className="pl-[34px]"><Combo label="翘曲" value="Sax(Warping)" width="w-[156px]" disabled /></div>
            <Box title="组合(Normal)" className="mt-[3px] mr-[3px] pb-[6px]">
              <div className="flex items-start justify-between mt-[5px] pl-[7px] pr-[5px]">
                <div className="grid auto-rows-[18px]">
                  <Radio name="pos" label="最大" checked />
                  <Radio name="pos" label="1 (-y,+z)" /><Radio name="pos" label="2 (+y,+z)" />
                  <Radio name="pos" label="3 (+y,-z)" /><Radio name="pos" label="4 (-y,-z)" />
                </div>
                <SectionSketch />
              </div>
            </Box>
          </Box>

          <Box title="显示选项" className="mt-[3px] ml-[2px] mr-[2px] pb-[3px] px-px">
            <label className="flex items-center justify-between h-[19px] mt-[2px] pl-[10px] pr-[12px]">比例系数
              <input defaultValue="1.000000" className={clsx('w-[94px] h-[19px] bg-white outline-none px-px', SUNK, MONO)} />
            </label>
            <Box title="填充方式" className="mt-[5px] mr-px pb-[2px]">
              <div className="flex items-center h-[18px] mt-[3px] gap-[7px]">
                <Radio name="fill" label="不填充" /><Radio name="fill" label="线填充" checked /><Radio name="fill" label="实体填充" />
              </div>
            </Box>
          </Box>

          <Box title="显示类型" className="mt-[3px] mr-[2px] pb-[3px]">
            <div className="grid grid-cols-[67px_31px_67px_20px] auto-rows-[21px] items-center mt-px pl-[11px]">
              <Check label="等值线" checked /><Dots label="等值线设置" /><Check label="变形" /><Dots label="变形设置" />
              <Check label="数值" /><Dots label="数值设置" /><Check label="图例" checked /><Dots label="图例设置" />
              <Check label="动画" /><Dots label="动画设置" /><Check label="变形前" /><span />
              <Check label="镜像" /><Dots label="镜像设置" />
            </div>
          </Box>

          <Box title="输出位置" className="mt-1 mr-[2px] pb-px">
            <div className="grid grid-cols-[75px_81px_34px] auto-rows-[17px] mt-[2px] pl-[3px]">
              <Check label="I" disabled /><Check label="中心" disabled /><Check label="J" disabled />
              <Check label="绝对最大" checked disabled /><Check label="最小/最大" disabled /><Check label="全部" disabled />
            </div>
          </Box>

          <div className="flex justify-end gap-[5px] mt-[13px]">
            <button type="button" className="w-[60px] h-[23px] bg-[#f0f0f0] border border-[#666] border-b-2 border-r-2">适用</button>
            <button type="button" className={clsx('w-[60px] h-[23px]', RAISED)}>关闭</button>
          </div>
        </div>
      </form>
    </div>
    <div className="flex items-start h-[25px] pl-[3px] pt-[2px] gap-[3px]">
      <button className="h-5 px-[5px] bg-linear-to-r from-white via-[#dcdcdc] to-white text-black">树形菜单</button>
      <button className="h-5 px-[5px] text-[#dfe1e1]">工作面板</button>
    </div>
  </aside>
);

// --- BEAM STRESS DIAGRAM ---
// x / y samples in viewport pixels, the curves are linear between them
const BOTTOM = [[10, 294], [25, 293], [45, 308], [102, 309], [141, 304], [163, 300], [190, 296], [235, 295], [272, 291], [290, 286], [295, 288], [301, 299], [303, 299], [305, 286], [307, 299], [310, 298], [318, 281], [337, 283], [357, 276], [390, 270], [423, 261], [459, 254], [500, 254], [533, 248], [555, 243], [561, 246], [566, 258], [568, 258], [570, 246], [572, 258], [575, 257], [582, 241], [602, 240], [625, 235], [663, 226], [692, 218], [732, 215], [773, 212], [785, 216], [818, 208], [826, 210], [831, 220], [833, 220], [835, 207], [837, 220], [840, 218], [848, 203], [869, 205], [871, 199], [904, 196], [936, 186], [977, 180], [1018, 171], [1051, 165], [1075, 153], [1096, 150]];
const MIDDLE = [[10, 294], [45, 306], [90, 301], [165, 287], [235, 285], [284, 266], [304, 254], [345, 256], [378, 263], [419, 251], [500, 245], [561, 223], [614, 222], [634, 225], [692, 208], [761, 203], [802, 186], [839, 176], [900, 187], [957, 170], [1039, 162], [1075, 153], [1096, 148]];
const PIERS = [305, 570, 835];

const at = (pts, x) => {
  for (let i = 1; i < pts.length; i++) {
    if (x <= pts[i][0]) {
      const [x0, y0] = pts[i - 1];
      const [x1, y1] = pts[i];
      return y0 + ((y1 - y0) * (x - x0)) / (x1 - x0);
    }
  }
  return pts[pts.length - 1][1];
};
const topY = (x) => 265 - (157 * (x - 10)) / 1055;
const deckY = (x) => (x < 46 ? topY(x) + (x - 10) * 0.600 : 280 - (157 * (x - 46)) / 1047);
const noise = (n) => {
  const s = Math.sin(n * 127.100) * 43758.545;
  return s - Math.floor(s);
};

const stripes = [];
for (let x = 11, i = 0; x < 1096; x += 2, i++) {
  const near = Math.min(...PIERS.map((p) => Math.abs(p - x)));
  const r = noise(i + 1);
  const end = Math.min(x - 10, 1096 - x);
  // spans drift between mostly orange and mostly yellow
  const mix = 0.400 + 0.180 * Math.sin(x / 23);
  let upper = r < mix ? '#ffb400' : r < 0.780 ? '#ffee00' : '#ecff00';
  if (end < 75) upper = r < 0.500 ? '#f4ff00' : '#d8ff10';
  if (near < 30 && r > 0.750) upper = '#b4f000';
  if (near < 5) upper = '#ff5500';
  let lower = near < 60 ? '#ff8000' : '#ffa400';
  if (near < 7) lower = '#ff4400';
  if (end < 80) lower = '#f2ee00';
  stripes.push({ x, i, near, end, r, upper, lower, top: Math.max(topY(x), x > 1065 ? 108 + (x - 1065) * 0.550 : 0), deck: deckY(x), mid: at(MIDDLE, x), bot: at(BOTTOM, x) - (near > 14 && near < 36 ? noise(i + 77) * 6 : 0) });
}

const BeamDiagram = () => (
  <svg viewBox="0 0 1116 594" preserveAspectRatio="xMinYMin meet" className="w-full h-full" role="img" aria-label="BEAM STRESS">
    {stripes.map((s) => (
      <g key={s.x}>
        <path d={`M${s.x} ${s.top}V${s.deck + 1}`} stroke={s.end < 60 ? '#ffe800' : s.r < 0.300 ? '#ff9a00' : '#ffc020'} strokeWidth="2.200" />
        <path d={`M${s.x} ${s.deck}V${s.mid}`} stroke={s.upper} strokeWidth="2.200" />
        {s.end > 75 && noise(s.i + 900) > 0.550 && <path d={`M${s.x + 1} ${s.deck}V${s.mid}`} stroke={s.r > 0.600 ? '#f8a800' : '#ffe400'} strokeWidth="1" />}
        <path d={`M${s.x} ${s.mid}V${s.bot}`} stroke={s.lower} strokeWidth="2.200" />
        {s.near > 6 && s.i % 2 === 0 && <path d={`M${s.x} ${s.bot - 4}v5`} stroke="#000" strokeWidth="2" />}
        {s.near > 8 && s.near < 22 && s.i % 4 === 0 && <path d={`M${s.x} ${s.bot - 18}v18`} stroke="#100800" strokeWidth="1" />}
        {s.x < 1064 && s.x > 16 && s.i % 2 === 0 && <path d={`M${s.x} ${s.top}v4`} stroke="#000" strokeWidth="2" />}
        {s.i % 2 === 1 && <path d={`M${s.x} ${s.bot - 4}v4M${s.x} ${s.top}v4`} stroke={s.end < 60 ? '#f2f490' : s.near < 6 ? '#ff4400' : '#f0b888'} strokeWidth="2" />}
        {s.i % 19 === 5 && <path d={`M${s.x} ${s.top + 4}v${5 + s.r * 5}`} stroke="#201000" />}
        {noise(s.i + 300) > 0.620 && <path d={`M${s.x} ${s.top + 6 + s.r * 7}v3`} stroke="#ffee20" strokeWidth="3" />}
        {noise(s.i + 500) > 0.850 && <path d={`M${s.x} ${s.top + 4 + s.r * 8}v4`} stroke="#ff8800" strokeWidth="3" />}
      </g>
    ))}
    <path d="M10 264L1065 107" stroke="#a01000" strokeWidth="1" />
    <g stroke="#b04400" strokeWidth="1" strokeDasharray="7 4" fill="none">
      <path d="M20 268L1072 112M28 272L1080 115M36 276L1086 119" />
      <path d="M46 280L1093 123" strokeDasharray="10 3" />
    </g>
    <path d={'M' + MIDDLE.map((p) => p.join(' ')).join('L')} fill="none" stroke="#ffe000" strokeWidth="1" />

    {/* ends */}
    {[[11, 259, 14], [18, 262, 14], [25, 266, 14], [35, 270, 14], [43, 275, 17]].map(([x, y, h]) => (
      <rect key={x} x={x - 1} y={y} width="3" height={h} fill="#4ade20" />
    ))}
    <path d="M44 292v22" stroke="#d8ff10" />
    {[[1065, 101, 8], [1073, 104, 9], [1081, 107, 10], [1089, 111, 12], [1097, 116, 18]].map(([x, y, h]) => (
      <rect key={x} x={x - 1} y={y} width="3" height={h} fill={x > 1090 ? '#8ae020' : '#18c860'} />
    ))}

    {/* piers */}
    {PIERS.map((p, i) => {
      const y = 213 - i * 39;
      return (
        <g key={p}>
          <path d={`M${p - 20} ${y + 19}l16-4v12l-20 5z`} fill="#c8f000" />
          <ellipse cx={p - 24} cy={y + 12} rx="4" ry="5" fill="#10e070" />
          <ellipse cx={p - 15} cy={y + 17} rx="4" ry="4" fill="#20e850" />
          <ellipse cx={p - 7} cy={y + 18} rx="4" ry="5" fill="#10e070" />
          <path d={`M${p - 22} ${y + 23}l10 1 4-3`} stroke="#20d020" strokeWidth="3" fill="none" />
          <path d={`M${p - 35} ${y + 13}v-22l3-6 3 6v22z`} fill="#0008c0" />
          <path d={`M${p - (i === 0 ? 29 : 35)} ${y + 13}v-20`} stroke="#70c8ff" strokeWidth="1.500" />
          <path d={`M${p - 3} ${y + 27}V${y + 5}l3-6 3 6v22z`} fill="#0008c0" />
          {i > 0 && <path d={`M${p - 3} ${y + 27}v-18`} stroke="#70c8ff" strokeWidth="1.500" />}
          <path d={`M${p - 3} ${y + 28}h6v14h-6z`} fill="#ff7000" />
        </g>
      );
    })}

    {/* undeformed outline */}
    <path d="M10 571l5-4 14 1 26 14-16 3zM15 567l12 12 38-6 14-2 12 3-36 8-20-5M28 575l-6 1 12 4M79 571l-10 6" fill="none" stroke="#d8dcd0" strokeWidth="1" />
  </svg>
);

const Compass = () => (
  <svg viewBox="0 0 72 72" className="absolute right-[10px] top-[10px] w-[72px] h-[72px]" role="img" aria-label="TOP">
    <g fill="#3b3b3b">
      <rect x="25" y="2" width="21" height="20" /><rect x="25" y="26" width="21" height="20" /><rect x="25" y="50" width="21" height="20" />
      <rect x="2" y="26" width="20" height="20" /><rect x="49" y="26" width="20" height="20" />
    </g>
    <path d="M25 1h21M25 71h21M1 26v20M70 26v20" stroke="#143c66" strokeWidth="2" />
    <path d="M6 7l10 10M17 9v9H8M65 7L55 17M54 9v9h9M6 65l10-10M8 54h9v9M65 65L55 55M63 54h-9v9" fill="none" stroke="#585858" strokeWidth="3" />
    <text x="35" y="40" textAnchor="middle" fontSize="9" fill="#111" fontFamily="DejaVu Sans, sans-serif">TOP</text>
  </svg>
);

const SupportMark = ({ red }) => (
  <svg viewBox="0 0 16 16" className="w-4 h-4" aria-hidden="true">
    <path d="M1 0v16M1 7h14M9 9v7M13 9v7M8 11l1-2 1 2M12 11l1-2 1 2" fill="none" stroke="#777" />
    <path d={red ? 'M8 0l5 5M13 0v5H9' : 'M7 3h7M12 1l3 2-3 2'} fill="none" stroke={red ? '#c03030' : '#777'} />
  </svg>
);

// --- LEGEND ---
const LEVELS = [
  ['#0000ff', ' 6.59595e+003'], ['#00ffff', ' 4.70974e+003'], ['#00ff6a', ' 2.82354e+003'], ['#00ff00', ' 0.00000e+000'],
  ['#6aff00', '-9.48875e+002'], ['#aaff00', '-2.83508e+003'], ['#ddff00', '-4.72129e+003'], ['#ffff00', '-6.60749e+003'],
  ['#ffb400', '-8.49370e+003'], ['#ff8000', '-1.03799e+004'], ['#ff3300', '-1.22661e+004'],
];

const Legend = () => (
  <aside className="w-[120px] shrink-0 border-l border-white pl-[3px] pr-[5px] flex flex-col text-white text-[10px] leading-3 font-[family-name:'DejaVu_Sans','Noto_Sans_CJK_SC',sans-serif] whitespace-nowrap">
    <div className="border-b border-white text-center pt-px">MIDAS/Civil<br />POST-PROCESSOR</div>
    <div className="border-b border-white text-center h-[17px] leading-[17px]">BEAM STRESS</div>
    <div className="text-center text-[11px] leading-[23px]">组合(最大值)</div>
    <div className="flex mt-2">
      <div className="w-[20px] border border-white mb-[8px]">
        {LEVELS.map(([c], i) => (
          <div key={i} className={clsx('h-[17px]', i > 0 && 'border-t border-white')} style={{ backgroundColor: c }} />
        ))}
      </div>
      <ul className="flex-1 -mt-2 pr-[10px] text-right leading-[17px]">
        {LEVELS.map(([, t]) => <li key={t}>{t}</li>)}
        <li>-1.41523e+004</li>
      </ul>
    </div>
    <div className="flex-1" />
    <div className="border-b border-white pb-[8px]"><p className="text-center">PostCS</p><p>CBall: RC ENV_SE~</p></div>
    <div className="border-b border-white py-[1px]"><p>MAX : 696</p><p>MIN : 782</p></div>
    <div className="border-b border-white leading-[14px] overflow-hidden pt-px"><p>文件: 4跨40 （连续</p><p>单位: kN/m ^2</p><p>日期: 07/20/2016</p></div>
    <p className="text-center leading-3">表示-方向</p>
    <div className="flex pb-[15px]">
      <div className="flex-1 leading-5"><p className="text-[#c85050]">X:-0.483</p><p className="text-[#58c858]">Y:-0.837</p><p className="text-[#5858c8]">Z: 0.259</p></div>
      <svg viewBox="0 0 40 44" className="w-10 h-11" aria-hidden="true">
        <path d="M14 34V11" stroke="#0000e0" strokeWidth="5" /><path d="M14 33l16-3" stroke="#e01010" strokeWidth="4" /><path d="M27 25l9 4-8 6z" fill="#e01010" />
        <path d="M14 33l-6-3" stroke="#10a020" strokeWidth="4" /><ellipse cx="6" cy="29" rx="4" ry="4" fill="#108838" /><circle cx="14" cy="34" r="5" fill="#ff90ff" />
        <g fill="#fff" fontSize="9"><text x="13" y="9">Z</text><text x="1" y="24">Y</text><text x="33" y="26">X</text></g>
      </svg>
    </div>
  </aside>
);

// --- INFO WINDOW ---
const MESSAGES = [
  '正在读取梁单元当前分析结果 - 移动荷载分析', '正在读取反力结果 - 施工阶段分析', '正在读取位移结果 - 施工阶段分析',
  '正在读取弹性连接单元的内力 - 施工阶段分析', '正在读取梁单元分析结果 - 施工阶段分析', '正在读取梁截面温度应力 - 施工阶段分析',
  '正在读取预应力钢束张拉力分析结果 - 施工阶段分析', '正在读取梁单元主拉应力 - 施工阶段分析',
];

const InfoWindow = () => (
  <section className="h-[219px] shrink-0 flex flex-col text-black">
    <div className="h-[21px] flex items-center bg-[#1f2a3a] text-[#e4e6e8] pl-[4px] pr-[6px]">
      <h2 className="flex-1">信息窗口</h2>
      <button aria-label="pin" className="mr-[9px]"><svg viewBox="0 0 8 10" className="w-2 h-[10px]"><path d="M2 1v5M5.500 1v5M1.500 1h5M0 6h8M4 6v4" fill="none" stroke="#fff" strokeWidth="1.300" /></svg></button>
      <button aria-label="close"><svg viewBox="0 0 8 8" className="w-2 h-2"><path d="M0 0l8 8M8 0L0 8" stroke="#fff" strokeWidth="1.700" /></svg></button>
    </div>
    <div className="flex-1 flex min-h-0 bg-[#fffbf0] border-4 border-t-[#8b8b8b] border-l-[#a5a5a5] border-r-[#e8e8e8] border-b-[#b8b8b8]">
      <ul className="flex-1 pl-[25px] pt-[2px] leading-4">
        {MESSAGES.map((m) => <li key={m} className="h-4"><Txt>{m}</Txt></li>)}
      </ul>
      <div className="w-4 bg-[#f2f2f2] flex flex-col items-center justify-between py-[7px]">
        <svg viewBox="0 0 6 4" className="w-[6px] h-1"><path d="M0 4h6L3 0z" fill="#444" /></svg>
        <div className="flex-1" />
        <div className="w-[14px] h-[33px] border border-[#999] bg-linear-to-r from-[#f5f5f5] to-[#cfcfcf] flex flex-col items-center justify-center gap-[2px] mb-[7px]">
          <span className="w-[7px] h-px bg-[#555]" /><span className="w-[7px] h-px bg-[#555]" /><span className="w-[7px] h-px bg-[#555]" />
        </div>
        <Caret />
      </div>
    </div>
    <label className="h-[19px] shrink-0 flex items-center bg-[#fffbf0] border-l-4 border-r-4 border-l-[#a5a5a5] border-r-[#e8e8e8] pl-[2px]">
      <Txt>{'>>'}</Txt><input aria-label="command" className="flex-1 bg-transparent outline-none" />
    </label>
    <div className="h-[18px] shrink-0 flex bg-[#f0f0f0] border-t border-black">
      <div className="flex pl-[2px]">
        {['M2 1v8M9 1L4 5l5 4z', 'M7 1L2 5l5 4z', 'M3 1l5 4-5 4z', 'M8 1v8M1 1l5 4-5 4z'].map((d) => (
          <button key={d} aria-label="scroll tabs" className={clsx('w-[18px] h-[17px] flex items-center justify-center', RAISED)}>
            <svg viewBox="0 0 10 10" className="w-[10px] h-[10px]"><path d={d} fill="#aaa" stroke="#999" /></svg>
          </button>
        ))}
      </div>
      <svg viewBox="0 0 8 17" className="w-2 h-[17px] ml-px"><path d="M0 0l5 16h3" fill="none" stroke="#222" /></svg>
      <button className="bg-white font-bold leading-[17px] px-[2px]">命令信息</button>
      <svg viewBox="0 0 18 17" className="w-[18px] h-[17px]"><path d="M4 17L10 0M6 3l5 13h7" fill="none" stroke="#222" /></svg>
      <button className="leading-[17px]">分析信息</button>
      <svg viewBox="0 0 12 17" className="w-3 h-[17px]"><path d="M4 17L10 0" fill="none" stroke="#222" strokeWidth="1.500" /></svg>
      <div className="flex-1 border-r-2 border-black mr-[3px]" />
      <div className="w-[412px] flex bg-[#f7f7f7] border-l border-[#333]">
        <button aria-label="scroll left" className={clsx('w-[17px] flex items-center justify-center', RAISED)}><svg viewBox="0 0 4 8" className="w-1 h-2"><path d="M4 0v8L0 4z" /></svg></button>
        <div className={clsx('w-[17px]', RAISED)} />
        <div className="flex-1" />
        <button aria-label="scroll right" className={clsx('w-[17px] mr-[2px] flex items-center justify-center', RAISED)}><svg viewBox="0 0 4 8" className="w-1 h-2"><path d="M0 0v8l4-4z" /></svg></button>
      </div>
    </div>
  </section>
);

const Center = () => (
  <main className="flex-1 min-w-0 flex flex-col ml-1 pb-[2px]">
    <div className="flex-1 min-h-0 mt-[2px] ml-[4px] mr-[3px] flex bg-black border-2 border-t-[#9a9a9a] border-l-[#9a9a9a] border-b-white border-r-white">
      <div className="relative flex-1 min-w-0 min-h-0">
        <BeamDiagram />
        <div className="absolute left-[14px] top-[11px] flex items-center gap-[5px]">
          <SupportMark />
          <div className="flex w-[147px] h-5 bg-white text-black">
            <select aria-label="阶段" defaultValue="PostCS" className="appearance-none flex-1 pl-[4px] outline-none"><option>PostCS</option></select>
            <span className="w-[15px] bg-[#ddd] flex items-center justify-center"><Caret /></span>
          </div>
          <span className="w-px h-[14px] bg-white ml-px" />
          <SupportMark red />
        </div>
        <Compass />
      </div>
      <Legend />
    </div>
    <div className="mt-[3px] h-[21px] shrink-0 flex bg-[#e8e8e8] items-start pl-[6px] pr-[12px]">
      <svg viewBox="0 0 6 10" className="w-[6px] h-[10px] mt-[5px]"><path d="M5 1v8L1 5z" fill="none" stroke="#444" /></svg>
      <svg viewBox="0 0 16 20" className="w-4 h-5 ml-[5px]"><path d="M0 0l7 17 4 2h5V0z" fill="#fff" /><path d="M0 0l7 17 4 2h5" fill="none" stroke="#333" /></svg>
      <button className="h-5 bg-white border-b border-[#333] font-bold text-[#444] leading-5">模型窗口</button>
      <svg viewBox="0 0 12 20" className="w-3 h-5"><path d="M0 19l4-2L11 0H0z" fill="#fff" /><path d="M0 19h1l3-2L11 0" fill="none" stroke="#333" /></svg>
      <div className="flex-1" />
      <svg viewBox="0 0 6 10" className="w-[6px] h-[10px] mt-[5px]"><path d="M1 1v8l4-4z" fill="none" stroke="#444" /></svg>
    </div>
    <div className="h-[3px] shrink-0" />
    <InfoWindow />
  </main>
);

// --- WORK TREE ---
const lcNode = (n, t) => ({ t: `静力荷载工况 ${n} [${t} ; ]`, i: 'lc', plus: true });
const TREE = [
  { t: '分析控制数据', i: 'axes', c: [{ t: '移动荷载分析数据', i: 'axes' }, { t: '施工阶段分析 [ 阶段=最后 ]', i: 'axes' }] },
  { t: '结构', i: 'slab', c: [{ t: '节点: 1070', i: 'nodePts' }, { t: '单元: 1604', i: 'elems', plus: true }] },
  {
    t: '特性值', i: 'ibox', c: [
      { t: '材料: 5', i: 'ibox', c: ['1 : C50', '2 : Strand1860', '3 : C50虚拟', '4 : C40', '5 : C50-横'].map((t) => ({ t, i: 'ibox' })) },
      { t: '时间依存材料(C和S)', i: 'timeMat', plus: true },
      { t: '时间依存性材料连接', i: 'timeLink', plus: true },
      { t: '修改单元依存材料特性值: 1533', i: 'modElem' },
      { t: '截面: 30', i: 'section', plus: true },
      { t: '钢筋: 4', i: 'rebar', plus: true },
      { t: '变截面组', i: 'taper', plus: true },
    ],
  },
  { t: '边界条件', i: 'bound', c: [{ t: '支承: 5', i: 'bound', plus: true }, { t: '弹性连接: 50', i: 'spring' }] },
  { t: '静力荷载', i: 'load', c: ['自重', '二期', '预应力', '整体升温', '整体降温', '正温度梯度', '负温度梯度', '风荷载', '制动力'].map((t, i) => lcNode(i + 1, t)) },
  { t: '张拉钢束', i: 'tendon', c: [{ t: '钢束特征值: 3', i: 'tendonProp', plus: true }, { t: '钢束形状: 125', i: 'tendonShape', plus: true }] },
  {
    t: '移动荷载分析', i: 'truckBlue', c: [
      { t: '移动荷载规范[ China ]', i: 'truckBlue' }, { t: '车道: 4', i: 'lane', plus: true },
      { t: '车辆: 2', i: 'truckGray', plus: true }, { t: '移动荷载工况: 2', i: 'truckBlue', plus: true },
    ],
  },
  { t: '施工阶段: 7', i: 'slab' },
];

const Guide = ({ d }) => (
  <svg viewBox="0 0 20 16" className="w-5 h-4 shrink-0" aria-hidden="true"><path d={d} stroke="#999" strokeDasharray="1 1" fill="none" /></svg>
);

const TreeNode = ({ node, guides, last }) => {
  const [open, setOpen] = useState(!node.plus);
  const branch = node.c || node.plus;
  const line = `M8.500 0V${last ? 8 : 16}M9 8.500h11`;
  return (
    <li>
      <div className="flex items-center h-4">
        {guides.map((g, i) => <Guide key={i} d={g ? 'M8.500 0v16' : ''} />)}
        {branch ? (
          <button onClick={() => setOpen(!open)} aria-label={node.t} className="w-5 h-4 shrink-0">
            <svg viewBox="0 0 20 16" className="w-5 h-4">
              <path d={line} stroke="#999" strokeDasharray="1 1" fill="none" />
              <rect x="4.500" y="4.500" width="8" height="8" fill="#fff" stroke="#888" />
              <path d={node.plus ? 'M6 8.500h5M8.500 6v5' : 'M6 8.500h5'} stroke="#000" />
            </svg>
          </button>
        ) : <Guide d={line} />}
        <span className="bg-[#eceae4] flex"><Icon name={node.i} /></span>
        <span className="ml-1 px-[2px] h-4 bg-[#eceae4] leading-4 whitespace-nowrap"><Txt>{node.t}</Txt></span>
      </div>
      {node.c && open && (
        <ul>{node.c.map((c, i) => <TreeNode key={c.t} node={c} guides={[...guides, !last]} last={i === node.c.length - 1} />)}</ul>
      )}
    </li>
  );
};

const RightPanel = () => (
  <aside className="w-[299px] shrink-0 ml-1 flex flex-col bg-[#243242]">
    <PanelHead title="树形菜单 2" />
    <Tabs items={['表格', '工作', '组', '计算书']} initial="工作" />
    <div className="flex-1 ml-[3px] mr-[2px] mb-[3px] bg-[#fffbf0] text-black">
      <div className="flex items-center h-4">
        <Icon name="slab" /><span className="ml-1 px-[2px] bg-[#eceae4] leading-4">工作</span>
      </div>
      <ul>{TREE.map((n, i) => <TreeNode key={n.t} node={n} guides={[]} last={i === TREE.length - 1} />)}</ul>
    </div>
  </aside>
);

const SIDE = ['-', 'sFit', 'sWin', 'sIn', 'sOut', 'sFit', '-', 'dynamic', 'sPan', 'sRot', '-', 'sRedraw', 'sInit', '|', 'cubeA', 'cubeB', 'cubeC', 'cubeD', 'sIso', '|', 'sDock', 'sHand'];

const SideBar = () => (
  <div className="relative w-[27px] shrink-0 bg-[#151919] pl-px pr-px pt-[94px]">
    <span className="absolute -left-[14px] top-[46px] w-7 h-7 border border-[#5aa8a8] bg-linear-to-r from-[#a8ffff] from-50% to-[#7cc4c4] to-50%" />
    <div className="bg-[#e6e6e6] rounded-[3px] flex flex-col items-center pb-[3px]">
      {SIDE.map((n, i) => {
        if (n === '-') return <svg key={i} viewBox="0 0 14 12" className="w-[14px] h-3"><path d="M0 6h14" stroke="#999" strokeWidth="2" strokeDasharray="2 2" /></svg>;
        if (n === '|') return <span key={i} className="w-[14px] h-px bg-[#333] my-[3px]" />;
        return <button key={i} aria-label={n} className="h-[22px] flex items-center"><Icon name={n} /></button>;
      })}
    </div>
  </div>
);

// --- STATUS BAR ---
const StatusButton = ({ label, children }) => (
  <button aria-label={label} className={clsx('w-[19px] h-[19px] flex items-center justify-center border-2 border-t-white border-l-white border-b-[#40a0a0] border-r-[#40a0a0] bg-[#f0f0f0]')}>{children}</button>
);

const StatusBar = () => (
  <footer className="flex items-center h-5 shrink-0 bg-linear-to-b from-[#32404f] to-[#16202c] text-[#eceef0] pr-[27px]">
    <span className="flex-1 pl-[6px]">如想查找帮助, 请按F1键</span>
    <span className="w-[110px] h-4 leading-4 pl-3 border-l border-[#5a6672]">无-1087</span>
    <span className="w-[163px] h-4 leading-4 pl-[5px] border-l border-[#5a6672]">U: 119.92, 0, -32.04167</span>
    <span className="w-[162px] h-4 leading-4 pl-[5px] border-l border-[#5a6672]">G: 119.92, 0, -32.04167</span>
    <div className="flex items-center gap-1 mr-[4px] ml-[2px]">
      <Combo label="力单位" value="kN" width="w-12" height="h-5" sans />
      <Combo label="长度单位" value="m" width="w-12" height="h-5" sans />
    </div>
    <div className="flex items-center w-[267px] h-5 bg-[#f0f0f0] text-black pl-[4px]">
      <div className="flex gap-[4px]">
        <StatusButton label="snap node"><svg viewBox="0 0 14 14" className="w-[14px] h-[14px]"><path d="M7 0v4M7 10v4M0 7h4M10 7h4" stroke="#000" strokeWidth="1.500" /><circle cx="7" cy="7" r="3" fill="none" stroke="#000" /></svg></StatusButton>
        <StatusButton label="snap element"><svg viewBox="0 0 14 14" className="w-[14px] h-[14px]"><path d="M5 0v14M0 7h5M8 4h6M8 10h6M8 4l3-2M8 4l3 2M8 10l3-2M8 10l3 2M2 5l3 2-3 2" stroke="#000" fill="none" strokeWidth="1.200" /></svg></StatusButton>
        <StatusButton label="play"><svg viewBox="0 0 8 12" className="w-2 h-3"><path d="M0 0l8 6-8 6z" fill="#999" /></svg></StatusButton>
      </div>
      <span className="ml-[5px]"><Combo label="过滤" value="none" width="w-[42px]" height="h-[18px]" /></span>
      <div className="flex gap-[4px] ml-[8px]">
        <StatusButton label="help"><span className="font-bold leading-3">?</span></StatusButton>
        <button aria-label="colour" className="w-[18px] h-[19px] bg-[#00ffff]" />
      </div>
      <input aria-label="step" defaultValue="0" className={clsx('ml-[2px] w-[33px] h-[18px] px-1 bg-[#f0f0f0] text-[#888]', SUNK)} />
      <span className="w-[14px] text-center">/</span>
      <input aria-label="steps" defaultValue="2" className={clsx('w-[36px] h-[18px] pl-3 bg-white', SUNK)} />
      <svg viewBox="0 0 8 14" className="w-2 h-[14px]"><path d="M1 5h6L4 2zM1 9h6l-3 3z" /></svg>
    </div>
  </footer>
);

// --- TASKBAR ---
const cadIcon = (flip) => (
  <svg viewBox="0 0 32 32" className="w-8 h-8"><rect width="32" height="32" fill="#1e9a8a" /><rect x="1.500" y="1.500" width="29" height="29" fill="none" stroke="#d8f0ec" />
    <path d={flip ? 'M4 27l8-20 6 20M7 20h9' : 'M3 22L9 4l8 20'} fill="none" stroke="#fff" strokeWidth={flip ? 4 : 2} /><path d="M22 2v28M4 24h26M18 20h8v8h-8z" fill="none" stroke="#dff5f0" strokeWidth="1.500" /></svg>
);
const TASKS = [
  { name: '资源管理器', w: 'w-[52px]', art: <svg viewBox="0 0 36 32" className="w-9 h-8"><path d="M3 4h9l2 3h16v18H3z" fill="#e8cf7a" stroke="#b89a48" /><path d="M6 9h24v16H6z" fill="#fbf3c0" stroke="#d8c47a" /><path d="M4 31V18h28v13h-6v-7H10v7z" fill="#a8d4f0" stroke="#5c9cc8" /></svg> },
  { name: 'Internet Explorer', w: 'w-[66px] pl-[6px]', plain: true, art: <svg viewBox="0 0 32 32" className="w-8 h-8"><path d="M26 18H11q1 5 5 5 4 0 5-2h5q-2 8-10 8-10 0-10-12 1-10 10-10 10 1 10 11zM11 14h10q-1-4-5-4t-5 4z" fill="#2a9ae0" stroke="#1870b8" strokeWidth=".6" /><path d="M3 28Q-1 22 12 10 26-1 29 4q1 3-2 7 1-6-4-5Q14 10 6 22q-2 5 2 5-3 3-5 1z" fill="#f2c840" stroke="#c89820" strokeWidth=".5" /></svg> },
  { name: 'midas Civil', w: 'w-[54px]', active: true, art: <CLogo className="w-8 h-8" /> },
  { name: 'AutoCAD', w: 'w-[59px]', art: cadIcon(false) },
  { name: 'Excel', w: 'w-[54px] mr-[7px]', art: <svg viewBox="0 0 32 32" className="w-8 h-8"><path d="M1 1h26v26L8 31H1z" fill="#e4f2dc" stroke="#3a8a3a" /><path d="M4 4h20v22H4z" fill="#dcefd4" /><path d="M7 6l14 18M21 6L7 24" stroke="#2f8a3c" strokeWidth="5" /><path d="M16 17h14v13H14z" fill="#f4faf0" stroke="#5a9a5a" /><path d="M17 21h12M16 25h13M22 18v11" stroke="#5a9a5a" /></svg> },
  { name: 'AutoCAD 2', w: 'w-[59px]', art: cadIcon(true) },
  { name: 'PDF', w: 'w-[59px]', art: <svg viewBox="0 0 32 32" className="w-8 h-8"><path d="M0 0h25l7 7v25H0z" fill="#f58a1e" /><path d="M24 0l8 8h-8z" fill="#fbd0a0" /><path d="M20 7q-11-1-11 8 0 6 6 6 7-1 7-9l-6 3" fill="none" stroke="#fff" strokeWidth="3.500" /><text x="16" y="30" textAnchor="middle" fontSize="7" fontWeight="bold" fill="#fff" fontFamily="Liberation Sans, sans-serif">PDF</text></svg> },
  { name: '蜂鸟', w: 'w-[59px]', art: <svg viewBox="0 0 32 32" className="w-8 h-8"><rect width="32" height="32" fill="#2c3c20" /><path d="M0 7h12q2-4 6-3 4 2 2 6l4 5 5 13-2 2-6-8-6-5-4-6z" fill="#cdb898" /><path d="M2 15l12 0 4 7-8-1z" fill="#8c9080" /><path d="M20 22l3 8 3-1-2-7z" fill="#7a7466" /><circle cx="16" cy="7" r="1" fill="#222" /><path d="M15 10l7 7-3 3-5-6z" fill="#f5e8e0" /></svg> },
];

const Taskbar = () => (
  <div className="relative flex items-stretch h-[39px] shrink-0 bg-[#a6c0de] border-t border-[#dbe6f2] overflow-hidden">
    <div className="w-[60px] flex items-center justify-center pr-[6px] bg-[#7488a4]">
      <button aria-label="开始">
        <svg viewBox="0 0 38 38" className="w-9 h-9"><defs><radialGradient id="orb" cx=".5" cy=".9" r=".8"><stop offset="0" stopColor="#5ac8f0" /><stop offset=".6" stopColor="#1d5c98" /><stop offset="1" stopColor="#2b4a6c" /></radialGradient></defs>
          <circle cx="19" cy="19" r="18" fill="url(#orb)" stroke="#23405e" /><path d="M10 11q5-3 9 0l-2 8q-4-3-9 0z" fill="#e85a28" /><path d="M20 11q5 3 9 0l-2 8q-5 3-9 0z" fill="#7cbc38" /><path d="M8 20q4-3 9 0l-2 8q-4-3-9 0z" fill="#3a90e0" /><path d="M18 20q4 3 9 0l-2 8q-5 3-9 0z" fill="#f8c828" /><path d="M4 14q15-14 30 0-15 4-30 0z" fill="#fff" opacity=".25" /></svg>
      </button>
    </div>
    <div className="flex gap-[3px] pt-px">
      {TASKS.map((t) => (
        <button key={t.name} aria-label={t.name} className={clsx('flex items-center justify-center rounded-[3px]', t.w,
          !t.plain && 'border border-[#6a84a4]', t.active ? 'bg-[#e6eef8] mr-px' : !t.plain && 'bg-linear-to-b from-[#c5d5e8] to-[#a3bad6]')}>{t.art}</button>
      ))}
    </div>
    <div className="flex-1" />
    <div className="flex items-center gap-2 w-[330px] pl-[34px] bg-linear-to-r from-[#a6c0de] to-[#8398b4] to-10%">
      <svg viewBox="0 0 16 12" className="w-4 h-3"><rect x=".5" y="2" width="15" height="8" rx="1" fill="#dde2e8" stroke="#777" /><path d="M2 4.500h12M2 6.500h12M4 8.500h8" stroke="#777" strokeDasharray="1 1" /></svg>
      <svg viewBox="0 0 16 16" className="w-4 h-4 mb-1"><circle cx="8" cy="8" r="7.500" fill="#1a3a98" stroke="#dde" /><path d="M5.500 6q0-3 2.500-3t2.500 2.500Q10.500 7 8 8.500V10M8 11.500V13" fill="none" stroke="#fff" strokeWidth="1.800" /></svg>
      <svg viewBox="0 0 12 20" className="w-3 h-5 mb-1"><path d="M1 4h6v4H1zM4 4V1h6v4H7" fill="none" stroke="#fff" strokeWidth="1.200" /><path d="M2 15h6l-3 3z" fill="#fff" /></svg>
      <svg viewBox="0 0 10 6" className="w-[10px] h-[6px] ml-[2px] mr-1"><path d="M0 6h10L5 0z" fill="#eef2f6" /></svg>
      <svg viewBox="0 0 16 16" className="w-4 h-4"><path d="M2 0v16M2 1q3-1 6 1 3 1 5 0v7q-3 1-5 0-3-1-6 0" fill="#f0f4f8" stroke="#445" /><circle cx="11" cy="11" r="4.500" fill="#c83028" /><path d="M9 9l4 4M13 9l-4 4" stroke="#fff" strokeWidth="1.500" /></svg>
      <svg viewBox="0 0 16 16" className="w-4 h-4"><ellipse cx="7" cy="9" rx="6" ry="6" fill="#222" /><circle cx="7" cy="4" r="4" fill="#222" /><ellipse cx="7" cy="11" rx="3.500" ry="4" fill="#fff" /><path d="M2 7h10v2H2z" fill="#d03020" /><path d="M5 5h4v1H5z" fill="#f8b020" /><circle cx="12" cy="12" r="4" fill="#f0b030" /><path d="M10 12h4" stroke="#fff" strokeWidth="1.500" /></svg>
      <svg viewBox="0 0 16 16" className="w-4 h-4"><path d="M5 3h10v9H5zM8 15h5M2 1v5M0 3h4v4H1v7h8" fill="#667" stroke="#f0f4f8" strokeWidth="1.300" /></svg>
      <svg viewBox="0 0 16 16" className="w-4 h-4"><path d="M1 6h3l5-4v12l-5-4H1z" fill="#f0f4f8" /><circle cx="11" cy="10" r="4" fill="none" stroke="#c83028" strokeWidth="2" /><path d="M8 7l6 6" stroke="#c83028" strokeWidth="2" /></svg>
      <svg viewBox="0 0 16 14" className="w-4 h-[14px]"><path d="M0 1h7v5H0zM9 1h7v5H9zM0 8h7v5H0zM9 8h7v5H9z" fill="#f4f6f8" /></svg>
      <div className="flex-1 mr-1 text-center text-white leading-[17px]"><p>12:18</p><p>2016/7/20</p></div>
      <span className="w-[15px] h-full border-l border-[#5a6c84] bg-[#74859c] shrink-0" />
    </div>
  </div>
);

export default function App() {
  return (
    <div className="relative h-screen flex flex-col overflow-hidden bg-[#151919] text-[12px] leading-4 font-[family-name:'Noto_Sans','Noto_Sans_CJK_SC',sans-serif]">
      <Header />
      <Ribbon />
      <Toolbar />
      <div className="flex-1 min-h-0 flex pt-px">
        <LeftPanel />
        <Center />
        <RightPanel />
        <SideBar />
      </div>
      <StatusBar />
      <Taskbar />
      <div className="absolute right-[6px] bottom-[2px] w-[110px] text-[#e4e8ec] opacity-80 pointer-events-none whitespace-nowrap">
        <p className="text-[30px] leading-[36px] italic">橋頭堡</p>
        <p className="text-[12px] leading-4 font-bold font-[family-name:'Liberation_Serif',serif] text-center">Bridgehead.com.cn</p>
      </div>
    </div>
  );
}
